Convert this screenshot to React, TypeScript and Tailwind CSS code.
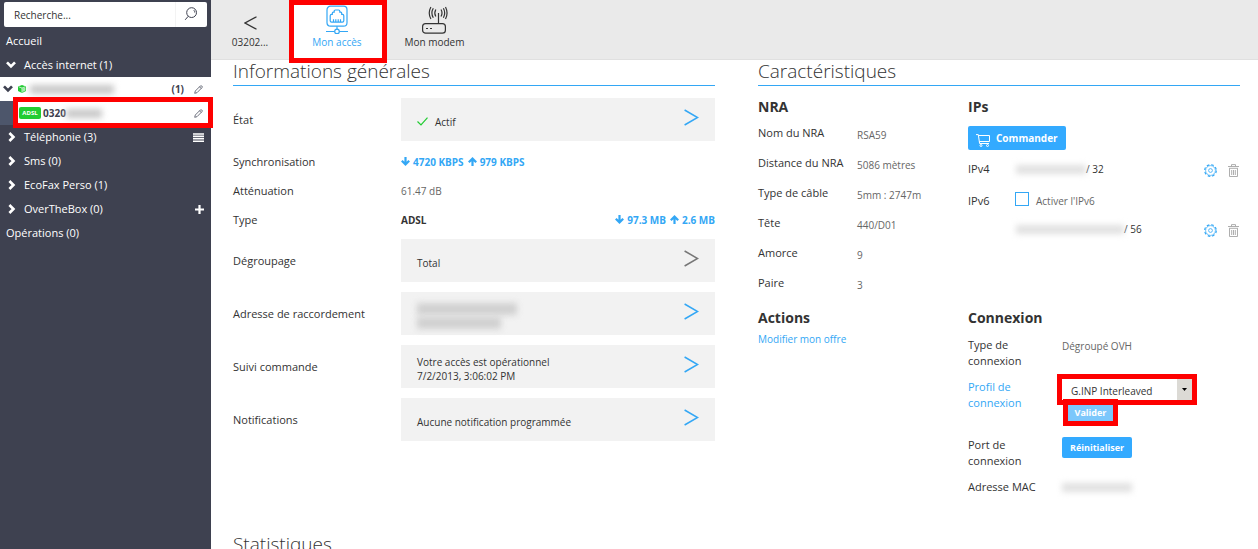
import type { ReactNode } from "react";

type RowProps = { label: string; children: ReactNode };

function Marker({ className }: { className: string }) {
  return <span aria-hidden="true" className={`pointer-events-none absolute z-10 border-[#fe0000] ${className}`} />;
}

function Redacted({ className }: { className: string }) {
  return <span aria-hidden="true" className={`inline-block shrink-0 blur-[3px] ${className}`} />;
}

function SearchIcon() {
  return (
    <svg width="14" height="14" viewBox="0 0 14 14" fill="none" stroke="#3e4150" strokeWidth="1">
      <circle cx="7.6" cy="5.6" r="4.9" />
      <path d="M4.2 9.3 1.2 12.8M9.8 3.2a3 3 0 0 1 1 2.4" />
    </svg>
  );
}

function PencilIcon() {
  return (
    <svg width="9" height="9" viewBox="0 0 9 9" fill="none" stroke="#4d5061" strokeWidth="0.8">
      <path d="M0.7 8.3 1.3 6 6.3 1Q7 .3 7.8 1T8 2.6L3 7.7ZM5.5 1.8 7.2 3.5" />
    </svg>
  );
}

function Chevron({ down = false }: { down?: boolean }) {
  return (
    <svg width="10" height="10" viewBox="0 0 10 10" fill="none" stroke="currentColor" strokeWidth="2.7">
      {down ? <path d="M1 2.4 5 6.4 9 2.4" /> : <path d="M2.4 1 6.4 5 2.4 9" />}
    </svg>
  );
}

function CubeIcon() {
  return (
    <svg width="8" height="8" viewBox="0 0 8 8">
      <path d="M4 0 8 1.4V6L4 8 0 6V1.4Z" fill="#2c3" />
      <path d="M.7 1.8 4 3 7.3 1.8M4 3V7.5" stroke="#fff" strokeWidth=".7" fill="none" />
      <path d="M4.5 3.5 7.4 2.4V5.6L4.5 7Z" fill="#fff" opacity=".6" />
    </svg>
  );
}

function NetworkIcon() {
  return (
    <svg width="22" height="29" viewBox="0 0 22 29" fill="none" stroke="currentColor" strokeWidth="1.2">
      <rect x="1" y="1.200" width="20" height="20" rx="3.5" />
      <path d="M5.6 17.2Q4.2 17.2 4.2 15.8V10.8Q4.2 9.4 5.6 9.4H6.3V8.2Q6.3 7.2 7.3 7.2H8.2V6.2Q8.2 5 9.4 5H12.6Q13.8 5 13.8 6.2V7.2H14.7Q15.7 7.2 15.7 8.2V9.4H16.4Q17.8 9.4 17.8 10.8V15.8Q17.8 17.2 16.4 17.2Z" />
      <path d="M7.500 14.300V17M9.800 14.300V17M12.200 14.300V17M14.500 14.300V17M11 21.200V24.200M0 26.500H8.600M13.400 26.500H22" />
      <circle cx="11" cy="26.400" r="2.300" />
    </svg>
  );
}

function ModemIcon() {
  return (
    <svg width="28" height="28" viewBox="0 0 28 28" fill="none" stroke="currentColor" strokeWidth="1.200">
      <rect x="1.600" y="17.600" width="22.800" height="9.600" rx="3" />
      <path d="M17.500 7V17.600M5 22.500h2M9 22.500h2" />
      <path d="M14.800 3.500Q12.800 7 14.800 10.500M12.300 2.300Q9.500 7 12.300 11.700M9.900 1Q6.600 7 9.900 13" />
      <path d="M20 3.500Q22 7 20 10.500M22.400 2.300Q25 7 22.400 11.700M24.500 1Q27.600 7 24.500 13" />
    </svg>
  );
}

function BigArrow({ grey = false }: { grey?: boolean }) {
  return (
    <svg
      width="15"
      height="17"
      viewBox="0 0 15 17"
      fill="none"
      strokeWidth="1.500"
      className={grey ? "stroke-[#777]" : "stroke-[#33a7f5]"}
    >
      <path d="M.6 1 13.600 8.500.6 16" />
    </svg>
  );
}

function Flow({ up = false }: { up?: boolean }) {
  return (
    <svg width="9" height="9" viewBox="0 0 9 9" fill="none" stroke="currentColor" strokeWidth="2.200">
      {up ? <path d="M4.500 9V1.800M.8 5.300 4.500 1.600 8.200 5.300" /> : <path d="M4.500 0V7.200M.8 3.700 4.500 7.400 8.200 3.700" />}
    </svg>
  );
}

function Rates({ down, up, className = "" }: { down: string; up: string; className?: string }) {
  return (
    <strong className={`flex items-center gap-1 text-[10px] text-[#33a7f5] ${className}`}>
      <span className="flex items-center gap-[3px]"><Flow />{down}</span>
      <span className="flex items-center gap-[3px]"><Flow up />{up}</span>
    </strong>
  );
}

function CartIcon() {
  return (
    <svg width="14" height="13" viewBox="0 0 14 13" fill="none" stroke="#fff" strokeWidth="1">
      <path d="M0 .6H2.300L3.600 9.500H13M2.500 1.500H13.500V7.500H3.400" />
      <circle cx="5" cy="11.500" r="1" />
      <circle cx="11.500" cy="11.500" r="1" />
    </svg>
  );
}

function GearIcon() {
  return (
    <svg width="13" height="13" viewBox="0 0 13 13" fill="none" stroke="#33a7f5">
      <circle cx="6.500" cy="6.500" r="5.800" strokeWidth="1.200" strokeDasharray="2.600 1.955" />
      <circle cx="6.500" cy="6.500" r="4.900" strokeWidth=".7" />
      <circle cx="6.500" cy="6.500" r="1.900" strokeWidth=".8" />
    </svg>
  );
}

function TrashIcon() {
  return (
    <svg width="11" height="13" viewBox="0 0 11 13" fill="none" stroke="#a5a5a5" strokeWidth=".9">
      <path d="M0 2.500H11M3.500 2.300V.6H7.500V2.300M1.500 4.500V12.500H9.500V4.500M1 4.300H10M3.700 6V11M5.500 6V11M7.300 6V11" />
    </svg>
  );
}

function TreeItem({ label, children }: { label: string; children?: ReactNode }) {
  return (
    <li className="flex h-6 items-center pr-[7px] pl-[7px]">
      <Chevron />
      <a href="#" className="ml-[7px] flex-1">{label}</a>
      {children}
    </li>
  );
}

function InfoRow({ label, children }: RowProps) {
  return (
    <div className="flex h-[29px] items-center">
      <dt className="w-[168px] shrink-0">{label}</dt>
      <dd className="flex flex-1 items-center">{children}</dd>
    </div>
  );
}

function BoxRow({ label, grey, children }: RowProps & { grey?: boolean }) {
  return (
    <div className="flex h-[43px] items-center">
      <dt className="w-[168px] shrink-0">{label}</dt>
      <dd className="flex h-full flex-1 items-center justify-between bg-[#f2f2f2] pr-4 pl-4">
        <div className="pt-1 text-[10px] leading-[14px]">{children}</div>
        <button type="button" aria-label={label} className="pb-1">
          <BigArrow grey={grey} />
        </button>
      </dd>
    </div>
  );
}

function Spec({ label, children }: RowProps) {
  return (
    <div className="flex h-[30px] items-center">
      <dt className="w-[99px] shrink-0">{label}</dt>
      <dd className="pt-1 text-[10px] text-[#666]">{children}</dd>
    </div>
  );
}

function IpTools() {
  return (
    <span className="ml-auto flex items-center gap-[11px] pt-[2px] pr-px">
      <button type="button" aria-label="Configurer"><GearIcon /></button>
      <button type="button" aria-label="Supprimer"><TrashIcon /></button>
    </span>
  );
}

function SectionTitle({ children }: { children: ReactNode }) {
  return <h2 className="h-[26px] border-b border-[#33a7f5] text-[19px] leading-[22px] font-light">{children}</h2>;
}

export default function App() {
  return (
    <div className="flex h-screen overflow-hidden bg-white font-['Open_Sans','Noto_Sans',sans-serif] text-[11px] leading-4 text-[#333]">
      <nav className="w-[211px] shrink-0 bg-[#3e4150] pt-[2px] text-white">
        <form className="mx-1 mb-[2px] flex h-[25px] items-center rounded-[2px] bg-white">
          <input
            type="search"
            aria-label="Recherche"
            placeholder="Recherche..."
            className="h-full min-w-0 flex-1 px-[10px] text-[10px] text-[#333] placeholder:text-[#333] focus:outline-none"
          />
          <button type="button" aria-label="Rechercher" className="flex h-full w-8 items-center justify-center border-l border-[#f3f3f3] pr-px pb-[2px]">
            <SearchIcon />
          </button>
        </form>
        <ul>
          <li className="flex h-6 items-center px-[6px]"><a href="#">Accueil</a></li>
          <li className="flex h-6 items-center px-[6px]">
            <Chevron down />
            <a href="#" className="ml-2">Accès internet (1)</a>
          </li>
          <li className="flex h-6 items-center bg-white pr-2 pl-[3px] text-[#3e4150]">
            <Chevron down />
            <span className="mr-1 ml-[5px]"><CubeIcon /></span>
            <Redacted className="h-[9px] w-[84px] bg-[#c8c8c8]" />
            <span className="mr-[10px] ml-auto text-[10px] font-bold">(1)</span>
            <PencilIcon />
          </li>
          <li className="relative flex h-6 items-center bg-[#4d566b] pl-[14px] text-[#3e4150]">
            <div className="flex h-full flex-1 items-center bg-white pr-2 pl-[5px]">
              <span className="mr-[2px] flex h-3 w-[22px] items-center justify-center rounded-[2px] bg-[#22cc33] text-[6px] font-bold text-white">ADSL</span>
              <a href="#" className="text-[10px] font-bold">0320</a>
              <Redacted className="h-[9px] w-[36px] bg-[#c8c8c8]" />
              <span className="ml-auto"><PencilIcon /></span>
            </div>
            <Marker className="-top-1 -right-[2px] -bottom-[3px] left-[13px] border-[5px]" />
          </li>
          <TreeItem label="Téléphonie (3)">
            <svg width="11" height="9" viewBox="0 0 11 9" stroke="#fff" strokeWidth="1.600">
              <path d="M0 1H11M0 3.400H11M0 5.800H11M0 8.200H11" />
            </svg>
          </TreeItem>
          <TreeItem label="Sms (0)" />
          <TreeItem label="EcoFax Perso (1)" />
          <TreeItem label="OverTheBox (0)">
            <svg width="9" height="9" viewBox="0 0 9 9" stroke="#fff" strokeWidth="2.200">
              <path d="M4.500 0V9M0 4.500H9" />
            </svg>
          </TreeItem>
          <li className="flex h-6 items-center px-[6px]"><a href="#">Opérations (0)</a></li>
        </ul>
      </nav>

      <main className="min-w-0 flex-1">
        <header className="flex h-[60px] border-b border-[#e0e0e0] bg-[#eaeaea] text-[10px]">
          <a href="#" className="flex w-[78px] flex-col items-center justify-end pb-[9px]">
            <svg width="13" height="14" viewBox="0 0 13 14" fill="none" stroke="#333" strokeWidth="1.300" className="mb-1">
              <path d="M12.500 .8 1 7 12.500 13.200" />
            </svg>
            03202...
          </a>
          <a href="#" className="relative flex w-[98px] flex-col items-center justify-end bg-white pr-[2px] pb-[9px] text-[#33a7f5]">
            <NetworkIcon />
            Mon accès
            <Marker className="inset-x-0 top-0 -bottom-1 border-[5px]" />
          </a>
          <a href="#" className="flex w-[95px] flex-col items-center justify-end pb-[9px]">
            <ModemIcon />
            Mon modem
          </a>
        </header>

        <div className="grid grid-cols-2 gap-x-[43px] pr-[18px] pl-[22px]">
          <section>
            <SectionTitle>Informations générales</SectionTitle>
            <dl className="pt-3">
              <div className="mb-[6px]">
                <BoxRow label="État">
                  <span className="flex items-center gap-[7px]">
                    <svg width="11" height="9" viewBox="0 0 11 9" fill="none" stroke="#2c3" strokeWidth="1.200">
                      <path d="M.5 4.500 4 8 10.500 .7" />
                    </svg>
                    Actif
                  </span>
                </BoxRow>
              </div>
              <InfoRow label="Synchronisation">
                <Rates down="4720 KBPS" up="979 KBPS" />
              </InfoRow>
              <InfoRow label="Atténuation"><span className="text-[10px] text-[#666]">61.47 dB</span></InfoRow>
              <InfoRow label="Type">
                <strong className="text-[10px]">ADSL</strong>
                <Rates down="97.3 MB" up="2.6 MB" className="ml-auto" />
              </InfoRow>
              <div className="flex flex-col gap-[10px] pt-[5px]">
                <BoxRow label="Dégroupage" grey>Total</BoxRow>
                <BoxRow label="Adresse de raccordement">
                  <span className="flex flex-col gap-[2px]">
                    <Redacted className="h-3 w-[100px] bg-[#d0d0d0]" />
                    <Redacted className="h-3 w-[84px] bg-[#d0d0d0]" />
                  </span>
                </BoxRow>
                <BoxRow label="Suivi commande">
                  Votre accès est opérationnel<br />7/2/2013, 3:06:02 PM
                </BoxRow>
                <BoxRow label="Notifications">Aucune notification programmée</BoxRow>
              </div>
            </dl>
          </section>

          <section>
            <SectionTitle>Caractéristiques</SectionTitle>
            <div className="grid grid-cols-[209px_1fr] pt-3">
              <div className="h-[211px]">
                <h3 className="mb-[2px] text-[14px] leading-[18px] font-bold">NRA</h3>
                <dl>
                  <Spec label="Nom du NRA">RSA59</Spec>
                  <Spec label="Distance du NRA">5086 mètres</Spec>
                  <Spec label="Type de câble">5mm : 2747m</Spec>
                  <Spec label="Tête">440/D01</Spec>
                  <Spec label="Amorce">9</Spec>
                  <Spec label="Paire">3</Spec>
                </dl>
              </div>
              <div className="pl-px">
                <h3 className="mb-[10px] text-[14px] leading-[18px] font-bold">IPs</h3>
                <button type="button" className="flex h-6 items-center gap-[6px] rounded-[2px] bg-[#33aaff] px-2 text-[10px] font-bold text-white">
                  <span className="pt-1"><CartIcon /></span>
                  Commander
                </button>
                <div className="flex h-[38px] items-center text-[10px]">
                  <span className="w-12 text-[11px]">IPv4</span>
                  <Redacted className="h-[9px] w-[70px] bg-[#e0e0e0]" />
                  / 32
                  <IpTools />
                </div>
                <div className="flex h-[26px] items-center text-[10px] text-[#666]">
                  <span className="w-[47px] text-[11px] text-[#333]">IPv6</span>
                  <input
                    id="ipv6"
                    type="checkbox"
                    className="mb-1 size-[14px] appearance-none border border-[#33a7f5] bg-white checked:bg-[#33a7f5]"
                  />
                  <label htmlFor="ipv6" className="pl-[7px]">Activer l'IPv6</label>
                </div>
                <div className="flex h-[30px] items-center pl-12 text-[10px]">
                  <Redacted className="h-[9px] w-[108px] bg-[#e0e0e0]" />
                  / 56
                  <IpTools />
                </div>
              </div>

              <div>
                <h3 className="mb-1 text-[14px] leading-[18px] font-bold">Actions</h3>
                <a href="#" className="text-[10px] text-[#33a7f5]">Modifier mon offre</a>
              </div>
              <div className="pl-px">
                <h3 className="mb-[10px] text-[14px] leading-[18px] font-bold">Connexion</h3>
                <div className="mb-[10px] flex h-8">
                  <span className="w-[94px] shrink-0 pr-5">Type de connexion</span>
                  <span className="pt-px text-[10px] text-[#666]">Dégroupé OVH</span>
                </div>
                <div className="mb-4 flex">
                  <label htmlFor="profile" className="w-[94px] shrink-0 pr-5 text-[#33a7f5]">Profil de connexion</label>
                  <div>
                    <div className="relative flex h-[21px] w-[130px]">
                      <select id="profile" className="h-full w-full appearance-none bg-white pt-[2px] pl-[9px] text-[10px] text-[#333] focus:outline-none">
                        <option>G.INP Interleaved</option>
                      </select>
                      <span className="pointer-events-none absolute inset-y-0 right-0 flex w-[15px] items-center justify-center bg-[#dcdad5]">
                        <svg width="5" height="3" viewBox="0 0 5 3"><path d="M0 0H5L2.500 3Z" fill="#000" /></svg>
                      </span>
                      <Marker className="-inset-[5px] border-[5px]" />
                    </div>
                    <div className="relative mt-1 ml-[6px] flex h-[17px] w-[45px]">
                      <button type="button" className="w-full bg-[#7cc7fb] text-[9px] leading-none font-bold text-white">Valider</button>
                      <Marker className="-inset-[5px] border-[5px]" />
                    </div>
                  </div>
                </div>
                <div className="mb-[10px] flex">
                  <span className="w-[94px] shrink-0 pr-5">Port de connexion</span>
                  <button type="button" className="h-[21px] rounded-[2px] bg-[#33aaff] px-2 text-[9px] font-bold text-white">Réinitialiser</button>
                </div>
                <div className="flex items-center">
                  <span className="w-[94px] shrink-0">Adresse MAC</span>
                  <Redacted className="h-[9px] w-[70px] bg-[#e0e0e0]" />
                </div>
              </div>
            </div>
          </section>

          <section className="col-span-2 pt-[38px]">
            <SectionTitle>Statistiques</SectionTitle>
          </section>
        </div>
      </main>
    </div>
  );
}
